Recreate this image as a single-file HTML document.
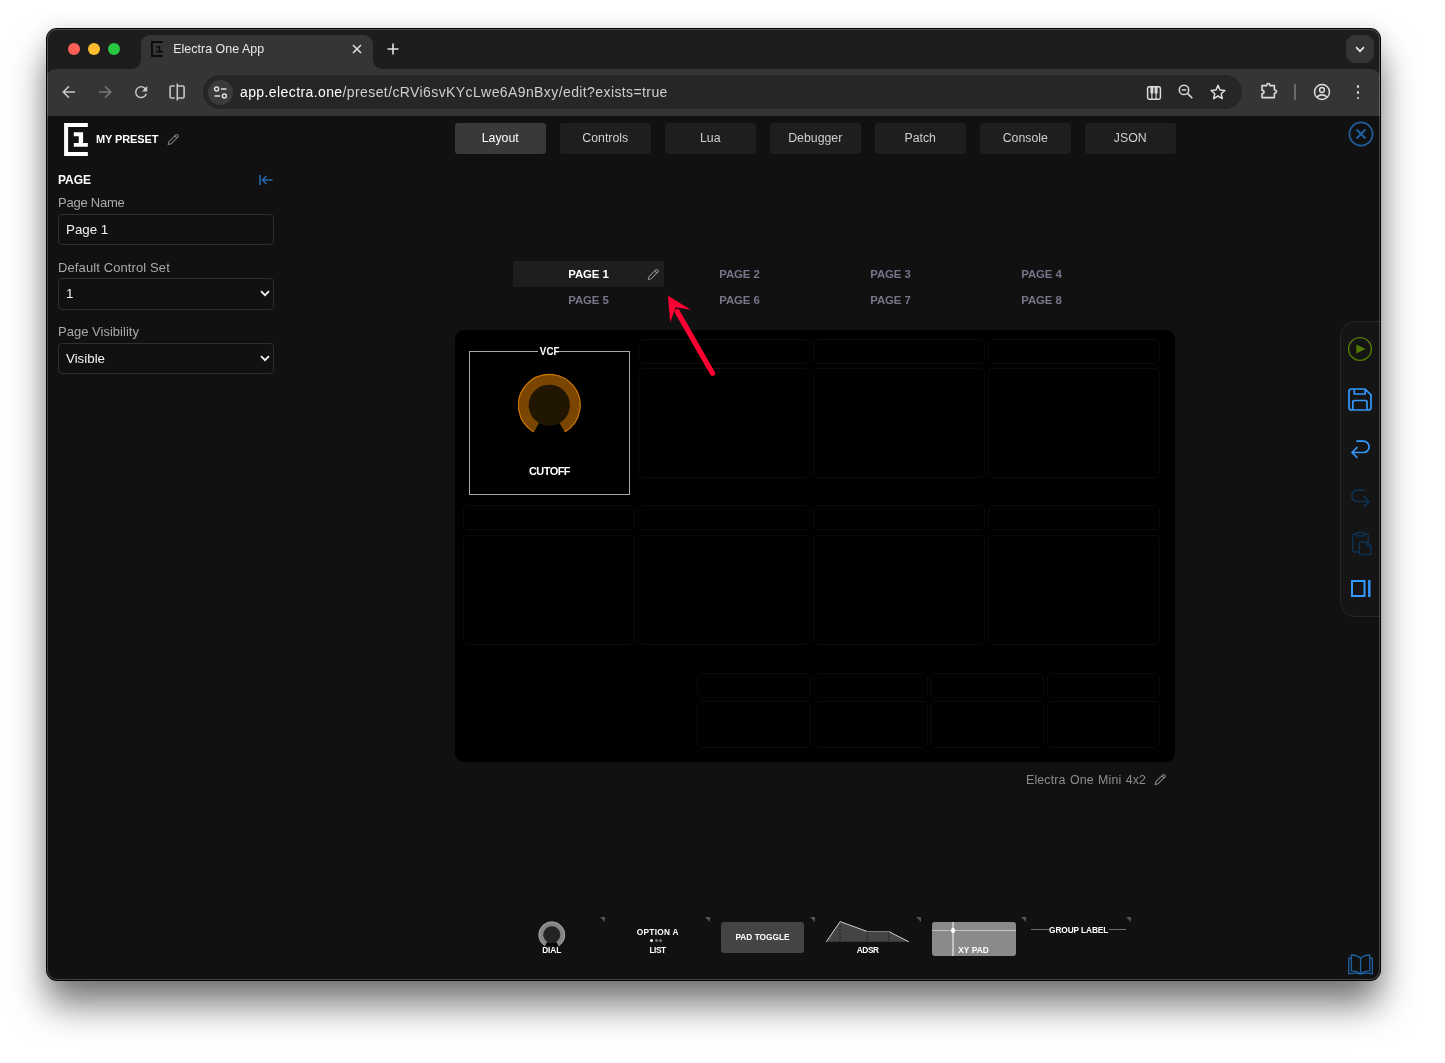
<!DOCTYPE html>
<html lang="en">
<head>
<meta charset="utf-8">
<title>Electra One App</title>
<style>
*{box-sizing:border-box;margin:0;padding:0}
html,body{width:1445px;height:1063px;overflow:hidden;background:#fff;font-family:"Liberation Sans",sans-serif;}
body{position:relative}
.abs{position:absolute}
#win{position:absolute;left:47px;top:29px;width:1333px;height:951px;border-radius:10px;background:#111;overflow:hidden}
#shadow{position:absolute;left:47px;top:29px;width:1333px;height:951px;border-radius:10px;box-shadow:0 0 0 1px #000,0 25px 36px rgba(0,0,0,.52),0 2px 22px rgba(0,0,0,.12)}
#win:after{content:"";position:absolute;inset:0;border-radius:10px;border:1px solid rgba(255,255,255,.22);pointer-events:none}
#inner{position:absolute;left:-1px;top:-1px;width:1335px;height:953px;will-change:transform}
#tabstrip{position:absolute;left:0;top:0;width:100%;height:52px;background:#1d1d1d}
#toolbar{position:absolute;left:0;top:41px;width:100%;height:47px;background:#353535;border-radius:10px 10px 0 0}
#content{position:absolute;left:0;top:88px;width:100%;height:865px;background:#111}
.tl{position:absolute;top:15px;width:12px;height:12px;border-radius:50%}
#tab{position:absolute;left:95.4px;top:7px;width:231.5px;height:34px;background:#353535;border-radius:9px 9px 0 0}
#tab:before,#tab:after{content:"";position:absolute;bottom:0;width:9px;height:9px;background:radial-gradient(circle at 0 0,transparent 8.5px,#353535 9px)}
#tab:before{left:-9px}
#tab:after{right:-9px;background:radial-gradient(circle at 100% 0,transparent 8.5px,#353535 9px)}
.t{position:absolute;white-space:nowrap;line-height:1}
.tabbtn{position:absolute;top:95px;width:90.5px;height:31px;border-radius:3px;background:#1e1e1e;color:#cfcfcf;font-size:12.3px;text-align:center;line-height:30px}
.tabbtn.on{background:#393939;color:#fff}
.lbl{position:absolute;left:12px;color:#a9a9a9;font-size:13px;line-height:1;white-space:nowrap}
.inp{position:absolute;left:12px;width:216px;height:31px;border:1px solid #2f2f2f;border-radius:4px;background:#111;color:#f2f2f2;font-size:13.33px;line-height:29px;padding-left:7px}
.pg{position:absolute;width:151px;text-align:center;font-weight:bold;font-size:11.4px;color:#77758a;letter-spacing:-.1px;line-height:1;white-space:nowrap}
.cell{position:absolute;border:1px solid #0b0b0b;border-radius:5px;background:#000}
.pal{position:absolute;font-weight:bold;font-size:8.3px;color:#fff;text-align:center;letter-spacing:.15px;line-height:1;white-space:nowrap}
.tri{position:absolute;top:889px;width:0;height:0;border-top:5px solid #555;border-left:5px solid transparent}
</style>
</head>
<body>
<div id="shadow"></div>
<div id="win"><div id="inner">
  <div id="tabstrip">
    <div class="tl" style="left:22px;background:#fe5f57"></div>
    <div class="tl" style="left:42px;background:#febc2e"></div>
    <div class="tl" style="left:62px;background:#28c840"></div>
    <div id="tab">
      <svg class="abs" style="left:9.6px;top:6px" width="13" height="17" viewBox="0 0 13 17"><path d="M11.8 1H.950V14.950H11.800" fill="none" stroke="#0c0c0c" stroke-width="1.9"/><path d="M5 4.900H9.300V9.700H11.800V11.600H5V9.700H7.500V6.500H5Z" fill="#0c0c0c"/></svg>
      <div class="t" style="left:31.8px;top:7.5px;font-size:12.4px;color:#e8e8e8;letter-spacing:.05px">Electra One App</div>
      <svg class="abs" style="left:210.8px;top:9px" width="10" height="10" viewBox="0 0 10 10"><path d="M1 1L9 9M9 1L1 9" stroke="#e3e3e3" stroke-width="1.5" fill="none"/></svg>
    </div>
    <svg class="abs" style="left:341px;top:15px" width="12" height="12" viewBox="0 0 12 12"><path d="M6 .5V11.5M.5 6H11.5" stroke="#e3e3e3" stroke-width="1.6" fill="none"/></svg>
    <div class="abs" style="left:1300px;top:7px;width:27.6px;height:27.6px;border-radius:9px;background:#353535"></div>
    <svg class="abs" style="left:1309px;top:17.5px" width="10" height="7" viewBox="0 0 10 7"><path d="M1 1.2L5 5.2L9 1.2" stroke="#e8e8e8" stroke-width="1.7" fill="none"/></svg>
  </div>
  <div id="toolbar">
    <svg class="abs" style="left:16.2px;top:15.9px" width="14" height="14" viewBox="0 0 14 14"><path d="M13 7H2M7 1.300L1.300 7L7 12.700" stroke="#c7c7c7" stroke-width="1.6" fill="none"/></svg>
    <svg class="abs" style="left:52.1px;top:15.9px" width="14" height="14" viewBox="0 0 14 14"><path d="M1 7H12M7 1.300L12.700 7L7 12.700" stroke="#787878" stroke-width="1.6" fill="none"/></svg>
    <svg class="abs" style="left:85.85px;top:13.650px" width="18.3" height="18.3" viewBox="0 0 24 24"><path d="M17.65 6.350A7.958 7.958 0 0 0 12 4a8 8 0 1 0 7.730 10h-2.080A5.990 5.990 0 0 1 12 18c-3.310 0-6-2.690-6-6s2.690-6 6-6c1.660 0 3.140.690 4.220 1.780L13 11h7V4l-2.350 2.350z" fill="#c7c7c7"/></svg>
    <svg class="abs" style="left:122px;top:14px" width="18" height="18" viewBox="0 0 18 18"><path d="M6.700 3H3.400Q2.100 3 2.100 4.300V13.700Q2.100 15 3.400 15H6.700M9.300 3H14.800Q16.100 3 16.100 4.300V13.700Q16.100 15 14.800 15H9.300M9.300 .6V17.400" stroke="#c7c7c7" stroke-width="1.6" fill="none"/></svg>
    <div class="abs" style="left:157px;top:6.4px;width:1039px;height:33.4px;border-radius:17px;background:#262626"></div>
    <div class="abs" style="left:162px;top:11px;width:25px;height:25px;border-radius:50%;background:#3b3b3b"></div>
    <svg class="abs" style="left:167px;top:16px" width="15" height="15" viewBox="0 0 15 15"><circle cx="3.6" cy="4" r="2" stroke="#dedede" stroke-width="1.5" fill="none"/><path d="M8 4H13.5M1.5 11H7" stroke="#dedede" stroke-width="1.5" fill="none"/><circle cx="11.4" cy="11" r="2" stroke="#dedede" stroke-width="1.5" fill="none"/></svg>
    <svg class="abs" style="left:1100px;top:16px" width="16" height="16" viewBox="0 0 16 16"><rect x="1.6" y="1.8" width="12.8" height="12.4" rx="1.6" fill="none" stroke="#dcdcdc" stroke-width="1.5"/><path d="M5.9 2V14M10.1 2V14" stroke="#dcdcdc" stroke-width="1.2"/><path d="M5.9 2V8.6M10.1 2V8.6" stroke="#dcdcdc" stroke-width="3"/></svg>
<svg class="abs" style="left:1131px;top:14px" width="18" height="18" viewBox="0 0 18 18"><circle cx="7" cy="6.9" r="4.7" fill="none" stroke="#dcdcdc" stroke-width="1.5"/><path d="M10.5 10.4L15.3 15.2" stroke="#dcdcdc" stroke-width="1.6"/><path d="M4.8 6.9H9.2" stroke="#dcdcdc" stroke-width="1.4"/></svg>
<svg class="abs" style="left:1163px;top:14px" width="18" height="18" viewBox="0 0 18 18"><path d="M9 2.4L11 7L15.900 7.400L12.200 10.700L13.300 15.600L9 13L4.700 15.600L5.800 10.700L2.100 7.400L7 7Z" fill="none" stroke="#dcdcdc" stroke-width="1.5" stroke-linejoin="round"/></svg>
<svg class="abs" style="left:1213.5px;top:13.2px" width="19" height="18" viewBox="0 0 19 18"><path d="M2 3.6H6.800V3A1.500 1.500 0 0 1 9.800 3V3.6H14.400V8H14.900A1.600 1.600 0 0 1 14.900 11.200H14.400V15.600H2V11.800H2.300A1.700 1.700 0 0 0 2.300 8.400H2Z" fill="none" stroke="#dcdcdc" stroke-width="1.6" stroke-linejoin="round"/></svg>
<div class="abs" style="left:1248.3px;top:15px;width:1.4px;height:16px;background:#6a6a6a"></div>
<svg class="abs" style="left:1265.7px;top:13.1px" width="20" height="20" viewBox="0 0 20 20"><circle cx="10" cy="10" r="7.5" fill="none" stroke="#dcdcdc" stroke-width="1.5"/><circle cx="10" cy="8" r="2.4" fill="none" stroke="#dcdcdc" stroke-width="1.5"/><path d="M4.900 15.100Q10 10.600 15.100 15.100" fill="none" stroke="#dcdcdc" stroke-width="1.5"/></svg>
<div class="abs" style="left:1310.7px;top:16.1px;width:2.8px;height:2.8px;border-radius:40%;background:#dcdcdc"></div>
<div class="abs" style="left:1310.7px;top:21.8px;width:2.8px;height:2.8px;border-radius:40%;background:#dcdcdc"></div>
<div class="abs" style="left:1310.7px;top:27.5px;width:2.8px;height:2.8px;border-radius:40%;background:#dcdcdc"></div>
    <div class="t" id="url" style="left:194px;top:16px;font-size:14px;color:#cfcfcf;letter-spacing:.4px"><span style="color:#fff">app.electra.one</span>/preset/cRVi6svKYcLwe6A9nBxy/edit?exists=true</div>
  </div>
  <div id="content">
<svg class="abs" style="left:18px;top:6px" width="25" height="35" viewBox="0 0 25 35"><path d="M23.85 2.9H2.100V31.900H23.850" fill="none" stroke="#fff" stroke-width="4"/><path d="M9.800 10.200H19.100V21.100H23.850V24.850H9.800V21.100H14.750V14.200H9.800Z" fill="#fff"/></svg>
<div class="t" style="left:50px;top:18px;font-size:11px;font-weight:bold;color:#fff;letter-spacing:-.12px">MY PRESET</div>
<svg class="abs" style="left:120.6px;top:17.4px" width="12.8" height="12.8" viewBox="0 0 12 12"><path d="M1.2 10.8L1.8 8.2L8.3 1.7Q9 1 9.7 1.7L10.3 2.3Q11 3 10.3 3.7L3.8 10.2ZM7.3 2.7L9.3 4.7" fill="none" stroke="#7d7d7d" stroke-width="1"/></svg>
<div class="t" style="left:12px;top:58px;font-size:12px;font-weight:bold;color:#fff;letter-spacing:0">PAGE</div>
<svg class="abs" style="left:213px;top:59px" width="14" height="10" viewBox="0 0 14 10"><path d="M1 0V10M3.5 5H13.5M7.5 1L3.5 5L7.5 9" fill="none" stroke="#2568ab" stroke-width="1.6"/></svg>
<div class="lbl" style="top:80px;letter-spacing:-.24px">Page Name</div>
<div class="inp" style="top:98px">Page 1</div>
<div class="lbl" style="top:145px;letter-spacing:.11px">Default Control Set</div>
<div class="inp" style="top:162.3px;height:31.4px;line-height:30px">1<svg class="abs" style="right:3px;top:11px" width="10" height="7" viewBox="0 0 10 7"><path d="M1 1.2L5 5.2L9 1.2" stroke="#f2f2f2" stroke-width="1.8" fill="none"/></svg></div>
<div class="lbl" style="top:209px;letter-spacing:.02px">Page Visibility</div>
<div class="inp" style="top:227px">Visible<svg class="abs" style="right:3px;top:11px" width="10" height="7" viewBox="0 0 10 7"><path d="M1 1.2L5 5.2L9 1.2" stroke="#f2f2f2" stroke-width="1.8" fill="none"/></svg></div>
<div class="tabbtn on" style="left:409px;top:7px">Layout</div>
<div class="tabbtn" style="left:514px;top:7px">Controls</div>
<div class="tabbtn" style="left:619px;top:7px">Lua</div>
<div class="tabbtn" style="left:724px;top:7px">Debugger</div>
<div class="tabbtn" style="left:829px;top:7px">Patch</div>
<div class="tabbtn" style="left:934px;top:7px">Console</div>
<div class="tabbtn" style="left:1039px;top:7px">JSON</div>
<svg class="abs" style="left:1302px;top:5.1px" width="26" height="26" viewBox="0 0 26 26"><circle cx="13" cy="13" r="11.6" fill="none" stroke="#1f5f9e" stroke-width="1.7"/><path d="M8.6 8.6L17.4 17.4M17.4 8.6L8.6 17.4" stroke="#1f5f9e" stroke-width="2.1" fill="none"/></svg>
<div class="abs" style="left:467px;top:145px;width:151px;height:26px;background:#1e1e1e"></div>
<div class="pg" style="left:467px;top:153px;color:#fff">PAGE 1</div>
<div class="pg" style="left:618px;top:153px">PAGE 2</div>
<div class="pg" style="left:769px;top:153px">PAGE 3</div>
<div class="pg" style="left:920px;top:153px">PAGE 4</div>
<div class="pg" style="left:467px;top:179px">PAGE 5</div>
<div class="pg" style="left:618px;top:179px">PAGE 6</div>
<div class="pg" style="left:769px;top:179px">PAGE 7</div>
<div class="pg" style="left:920px;top:179px">PAGE 8</div>
<svg class="abs" style="left:600.8px;top:152.300px" width="12.8" height="12.8" viewBox="0 0 12 12"><path d="M1.2 10.8L1.8 8.2L8.3 1.7Q9 1 9.7 1.7L10.3 2.3Q11 3 10.3 3.7L3.8 10.2ZM7.3 2.7L9.3 4.7" fill="none" stroke="#8a8a8a" stroke-width="1"/></svg>
<div class="abs" style="left:409px;top:214px;width:720px;height:432px;background:#000;border-radius:9px"></div>
<div class="cell" style="left:417px;top:389px;width:172px;height:25px"></div>
<div class="cell" style="left:417px;top:419px;width:172px;height:110px"></div>
<div class="cell" style="left:592px;top:223px;width:172px;height:25px"></div>
<div class="cell" style="left:592px;top:252px;width:172px;height:110px"></div>
<div class="cell" style="left:592px;top:389px;width:172px;height:25px"></div>
<div class="cell" style="left:592px;top:419px;width:172px;height:110px"></div>
<div class="cell" style="left:767px;top:223px;width:172px;height:25px"></div>
<div class="cell" style="left:767px;top:252px;width:172px;height:110px"></div>
<div class="cell" style="left:767px;top:389px;width:172px;height:25px"></div>
<div class="cell" style="left:767px;top:419px;width:172px;height:110px"></div>
<div class="cell" style="left:942px;top:223px;width:172px;height:25px"></div>
<div class="cell" style="left:942px;top:252px;width:172px;height:110px"></div>
<div class="cell" style="left:942px;top:389px;width:172px;height:25px"></div>
<div class="cell" style="left:942px;top:419px;width:172px;height:110px"></div>
<div class="cell" style="left:651px;top:557px;width:114px;height:25px"></div>
<div class="cell" style="left:651px;top:585px;width:114px;height:47px"></div>
<div class="cell" style="left:768px;top:557px;width:114px;height:25px"></div>
<div class="cell" style="left:768px;top:585px;width:114px;height:47px"></div>
<div class="cell" style="left:884px;top:557px;width:114px;height:25px"></div>
<div class="cell" style="left:884px;top:585px;width:114px;height:47px"></div>
<div class="cell" style="left:1001px;top:557px;width:113px;height:25px"></div>
<div class="cell" style="left:1001px;top:585px;width:113px;height:47px"></div>
<div class="abs" style="left:423px;top:235px;width:161px;height:144px;border:1px solid #a8a8a8"></div>
<div class="t" style="left:491.9px;top:229px;width:20.6px;text-align:center;background:#000;font-weight:bold;font-size:11.7px;color:#fff"><span style="display:inline-block;transform:scaleX(.84)">VCF</span></div>
<svg class="abs" style="left:472px;top:257px" width="64" height="64" viewBox="0 0 64 64"><circle cx="31.3" cy="32.3" r="20.6" fill="#211602"/><path d="M18.40 54.64A25.80 25.80 0 1 1 44.20 54.64" fill="none" stroke="#7a4500" stroke-width="10.6"/><path d="M15.85 59.06A30.90 30.90 0 1 1 46.75 59.06" fill="none" stroke="#d07a00" stroke-width="1.1"/></svg>
<div class="t" style="left:423px;top:350px;width:161px;text-align:center;font-weight:bold;font-size:11px;color:#fff;letter-spacing:-.55px">CUTOFF</div>
<svg class="abs" style="left:614px;top:174px" width="60" height="90" viewBox="660 290 60 90"><path d="M712.5 373.2L677.200 311.600" stroke="#ff0033" stroke-width="5.3" stroke-linecap="round" fill="none"/><path d="M668 295.700L690.900 309.800L675.600 307.300L670.200 322.400Z" fill="#ff0033"/></svg>
<div class="t" style="left:980px;top:657.5px;font-size:12.4px;color:#8c8c8c;letter-spacing:.15px;word-spacing:.7px">Electra One Mini 4x2</div>
<svg class="abs" style="left:1107.5px;top:657.2px" width="12.8" height="12.8" viewBox="0 0 12 12"><path d="M1.2 10.8L1.8 8.2L8.3 1.7Q9 1 9.7 1.7L10.3 2.3Q11 3 10.3 3.7L3.8 10.2ZM7.3 2.7L9.3 4.7" fill="none" stroke="#8a8a8a" stroke-width="1"/></svg>
<div class="abs" style="left:1294px;top:205px;width:44px;height:296px;border:1px solid #262626;border-radius:15px 0 0 15px;background:#151515"></div>
<svg class="abs" style="left:1301.4px;top:220.3px" width="26" height="26" viewBox="0 0 26 26"><circle cx="13" cy="13" r="11.4" fill="none" stroke="#537a00" stroke-width="1.4"/><path d="M9.400 8.600L18.600 13L9.400 17.400Z" fill="#537a00"/></svg>
<svg class="abs" style="left:1302.4px;top:271.6px" width="24" height="23" viewBox="0 0 24 23"><path d="M3.500 1H17L23 6.800V19.500Q23 22 20.500 22H3.500Q1 22 1 19.500V3.500Q1 1 3.500 1ZM6.300 1V6H17.200V1.200M4.800 22V14Q4.800 12.500 6.300 12.500H17.500Q19 12.500 19 14V22" fill="none" stroke="#3399ff" stroke-width="1.7" stroke-linejoin="round"/></svg>
<svg class="abs" style="left:1304px;top:323px" width="21" height="20" viewBox="0 0 21 20"><path d="M2 13.5H13.5A5.6 5.6 0 0 0 13.5 2.2H7M7 8.5L2 13.5L7 18.5" fill="none" stroke="#3399ff" stroke-width="1.7" stroke-linecap="round" stroke-linejoin="round"/></svg>
<svg class="abs" style="left:1304px;top:371.5px;transform:scaleX(-1)" width="21" height="20" viewBox="0 0 21 20"><path d="M2 13.5H13.5A5.6 5.6 0 0 0 13.5 2.2H7M7 8.5L2 13.5L7 18.5" fill="none" stroke="#0f3253" stroke-width="1.7" stroke-linecap="round" stroke-linejoin="round"/></svg>
<svg class="abs" style="left:1305px;top:414px" width="22" height="26" viewBox="1351 530 22 26"><path d="M1356.500 534H1354.300Q1352.800 534 1352.800 535.500V550.500Q1352.800 552 1354.300 552H1359M1364.500 534H1366.800Q1368.300 534 1368.300 535.500V541.500M1356.500 534.500Q1356.500 532.200 1360.500 532.200Q1364.500 532.200 1364.500 534.500V536H1356.500ZM1359.300 543.500Q1359.300 542 1360.800 542H1367L1371 546V553Q1371 554.500 1369.500 554.500H1360.800Q1359.300 554.500 1359.300 553ZM1367 542V546H1371" fill="none" stroke="#0f3253" stroke-width="1.4" stroke-linejoin="round"/></svg>
<svg class="abs" style="left:1304.8px;top:463.8px" width="20" height="17" viewBox="0 0 20 17"><rect x="1" y="1" width="12.5" height="15" fill="none" stroke="#3399ff" stroke-width="2"/><path d="M18.3 0V17" stroke="#3399ff" stroke-width="2.4"/></svg>
<svg class="abs" style="left:1302.1px;top:838px" width="25.2" height="21.3" viewBox="0 0 26 22"><path d="M13 4.5Q9 .8 3.5 1V17.5Q9 17.3 13 20.3Q17 17.3 22.5 17.5V1Q17 .8 13 4.5ZM13 4.5V20.3M3.5 4.3H.8V20.5Q8 19 13 20.8Q18 19 25.2 20.5V4.3H22.5" fill="none" stroke="#1f5f9e" stroke-width="1.4" stroke-linejoin="round"/></svg>
<div class="tri" style="left:554.3px;top:801.0px"></div>
<div class="tri" style="left:659.3px;top:801.0px"></div>
<div class="tri" style="left:764.3px;top:801.0px"></div>
<div class="tri" style="left:870.3px;top:801.0px"></div>
<div class="tri" style="left:975.3px;top:801.0px"></div>
<div class="tri" style="left:1080.3px;top:801.0px"></div>
<svg class="abs" style="left:492.0px;top:805.0px" width="28" height="28" viewBox="0 0 28 28"><path d="M8.8 21.5H18.8L19.5 24.5H8Z" fill="#000"/><circle cx="13.8" cy="13.8" r="8.6" fill="#242424"/><path d="M8.08 22.96A10.80 10.80 0 1 1 19.52 22.96" fill="none" stroke="#858585" stroke-width="4.6"/><path d="M6.96 24.74A12.90 12.90 0 1 1 20.64 24.74" fill="none" stroke="#b5b5b5" stroke-width=".8"/></svg>
<div class="pal" style="left:465.7px;top:830.1px;width:80px;letter-spacing:-.1px">DIAL</div>
<div class="pal" style="left:571.8px;top:812.0px;width:80px;letter-spacing:.27px">OPTION A</div>
<div class="abs" style="left:604.3px;top:823.2px;width:3px;height:3px;border-radius:50%;background:#fff"></div>
<div class="abs" style="left:608.8px;top:823.2px;width:3px;height:3px;border-radius:50%;background:#777"></div>
<div class="abs" style="left:613.0px;top:823.2px;width:3px;height:3px;border-radius:50%;background:#777"></div>
<div class="pal" style="left:571.5px;top:830.1px;width:80px;letter-spacing:-.48px">LIST</div>
<div class="abs" style="left:675px;top:806px;width:83px;height:31px;border-radius:3px;background:#444"></div>
<div class="pal" style="left:676.5px;top:817.0px;width:80px;letter-spacing:0">PAD TOGGLE</div>
<svg class="abs" style="left:778px;top:804px" width="90" height="24" viewBox="824 920 90 24"><path d="M826.3 941.8L840.1 921.6L867.2 931.5H888.7L908.9 941.8Z" fill="#444"/><path d="M840.1 922V942M867.2 932V942M888.7 932V942" stroke="#222" stroke-width="1" stroke-dasharray="2 1.5" fill="none"/><path d="M826.3 941.8L840.1 921.6L867.2 931.5" fill="none" stroke="#d0d0d0" stroke-width="1"/><path d="M867.2 931.5H888.7" fill="none" stroke="#777" stroke-width="1"/><path d="M888.7 931.5L908.9 941.8" fill="none" stroke="#d0d0d0" stroke-width="1"/></svg>
<div class="pal" style="left:781.7px;top:830.2px;width:80px;letter-spacing:-.4px">ADSR</div>
<div class="abs" style="left:886px;top:806px;width:83.5px;height:34px;border-radius:3px;background:#8a8a8a;overflow:hidden"><div class="abs" style="left:0;top:7.8px;width:84px;height:1.4px;background:#c2c2c2"></div><div class="abs" style="left:20.2px;top:0;width:1.9px;height:34px;background:#c2c2c2"></div><div class="abs" style="left:18.9px;top:6.2px;width:4.6px;height:4.6px;border-radius:50%;background:#fff"></div></div>
<div class="pal" style="left:887.5px;top:830.2px;width:80px;letter-spacing:.07px">XY PAD</div>
<div class="abs" style="left:984.6px;top:813.2px;width:95px;height:1px;background:#6d6d6d"></div>
<div class="pal" style="left:1002.7px;top:810.1px;width:60px;letter-spacing:-.1px;background:#111">GROUP LABEL</div>
</div>
</div></div>
</body>
</html>
